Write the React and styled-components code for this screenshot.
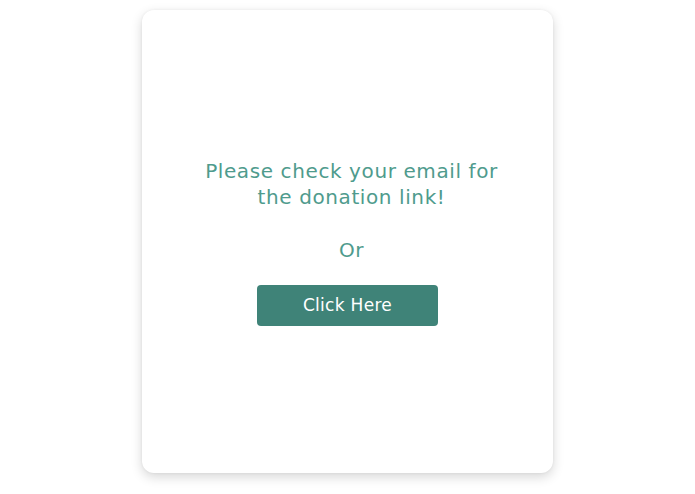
import React from "react";
import styled, { createGlobalStyle } from "styled-components";

const GlobalStyle = createGlobalStyle`
  body {
    margin: 0;
    background: #ffffff;
    font-family: "DejaVu Sans", "Noto Sans", sans-serif;
  }
`;

const Page = styled.div`
  width: 695px;
  height: 494px;
  display: flex;
  justify-content: center;
  padding-top: 10px;
  box-sizing: border-box;
`;

const Card = styled.div`
  width: 411px;
  height: 463px;
  background: #ffffff;
  border-radius: 12px;
  box-shadow: 0 4px 12px rgba(0, 0, 0, 0.16), 0 0 3px rgba(0, 0, 0, 0.06);
  display: flex;
  flex-direction: column;
  align-items: center;
  justify-content: center;
`;

const Message = styled.p`
  margin: 0 0 0 8px;
  color: #4f9b8d;
  font-size: 20px;
  letter-spacing: 0.6px;
  line-height: 26px;
  text-align: center;
  font-weight: 400;
`;

const Divider = styled.p`
  margin: 27px 0 0 8px;
  color: #4f9b8d;
  font-size: 20px;
  letter-spacing: 0.6px;
  line-height: 26px;
`;

const Button = styled.button`
  margin-top: 22px;
  width: 181px;
  height: 41px;
  border: none;
  border-radius: 4px;
  background: #3f8378;
  color: #ffffff;
  font-family: inherit;
  font-size: 17px;
  letter-spacing: 0.3px;
  cursor: pointer;
`;

export default function App() {
  return (
    <>
      <GlobalStyle />
      <Page>
        <Card>
          <Message>
            Please check your email for
            <br />
            the donation link!
          </Message>
          <Divider>Or</Divider>
          <Button>Click Here</Button>
        </Card>
      </Page>
    </>
  );
}
